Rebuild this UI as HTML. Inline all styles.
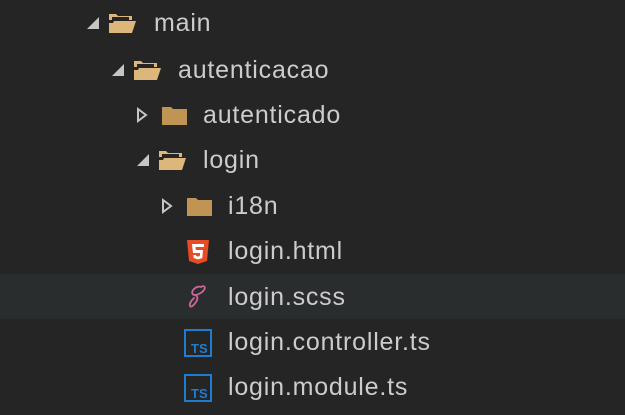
<!DOCTYPE html>
<html><head><style>
body{margin:0;width:625px;height:415px;background:#252526;overflow:hidden;font-family:"Liberation Sans",sans-serif;}
.row{position:absolute;left:0;width:625px;height:45px;}
.hov{background:#2a2d2e;}
.t{position:absolute;top:8px;font-size:25px;letter-spacing:0.8px;color:#cccccc;line-height:30px;}
svg{position:absolute;}
</style></head><body>
<div class="row" style="top:0">
 <svg style="left:86px;top:16px" width="14" height="14"><polygon points="13,1 13,13 1,13" fill="#c5c5c5"/></svg>
 <svg style="left:108px;top:11px" width="30" height="24"><path d="M1 3h7l2 2h14v4H1z" fill="#dcb67a"/><path d="M4 6h17v3H4z" fill="#252526"/><path d="M6 10h22l-4 12H1V12h4z" fill="#dcb67a"/></svg>
 <div class="t" style="left:154px">main</div>
</div>
<div class="row" style="top:47px">
 <svg style="left:111px;top:16px" width="14" height="14"><polygon points="13,1 13,13 1,13" fill="#c5c5c5"/></svg>
 <svg style="left:133px;top:11px" width="30" height="24"><path d="M1 3h7l2 2h14v4H1z" fill="#dcb67a"/><path d="M4 6h17v3H4z" fill="#252526"/><path d="M6 10h22l-4 12H1V12h4z" fill="#dcb67a"/></svg>
 <div class="t" style="left:178px">autenticacao</div>
</div>
<div class="row" style="top:92px">
 <svg style="left:136px;top:15px" width="12" height="16"><polygon points="2,2 10,8 2,14" fill="none" stroke="#c5c5c5" stroke-width="2"/></svg>
 <svg style="left:161px;top:12px" width="28" height="22"><path d="M1 3h9l2 2h14v16H1z" fill="#c09553"/></svg>
 <div class="t" style="left:203px">autenticado</div>
</div>
<div class="row" style="top:137px">
 <svg style="left:136px;top:16px" width="14" height="14"><polygon points="13,1 13,13 1,13" fill="#c5c5c5"/></svg>
 <svg style="left:158px;top:11px" width="30" height="24"><path d="M1 3h7l2 2h14v4H1z" fill="#dcb67a"/><path d="M4 6h17v3H4z" fill="#252526"/><path d="M6 10h22l-4 12H1V12h4z" fill="#dcb67a"/></svg>
 <div class="t" style="left:203px">login</div>
</div>
<div class="row" style="top:183px">
 <svg style="left:161px;top:15px" width="12" height="16"><polygon points="2,2 10,8 2,14" fill="none" stroke="#c5c5c5" stroke-width="2"/></svg>
 <svg style="left:186px;top:12px" width="28" height="22"><path d="M1 3h9l2 2h14v16H1z" fill="#c09553"/></svg>
 <div class="t" style="left:228px">i18n</div>
</div>
<div class="row" style="top:228px">
 <svg style="left:186px;top:11px" width="24" height="26" viewBox="0 0 24 26"><path d="M1 1h22l-2 21-9 3-9-3z" fill="#e44d26"/><path d="M6 5h12v3H9.5l.3 3H17l-.7 8L12 20.5 7.7 19l-.3-3h2.6l.2 1 1.8.6 1.8-.6.3-3H7z" fill="#fff"/></svg>
 <div class="t" style="left:228px">login.html</div>
</div>
<div class="row hov" style="top:274px">
 <svg style="left:187px;top:10px" width="20" height="28" viewBox="0 0 20 28"><path d="M14 3c3-2 5 0 3 3-2 3-7 5-9 5-3 0-4-3-1-6 2-2 5-3 7-2M8 11c3 1 3 4 1 7-2 3-5 6-6 4-1-3 2-6 4-8" fill="none" stroke="#cd6799" stroke-width="1.8" stroke-linecap="round"/></svg>
 <div class="t" style="left:228px">login.scss</div>
</div>
<div class="row" style="top:319px">
 <svg style="left:184px;top:10px" width="28" height="28"><rect x="1" y="1" width="26" height="26" fill="none" stroke="#1e7cd1" stroke-width="2"/><text x="7" y="24" font-family="Liberation Sans" font-size="13" font-weight="bold" fill="#1e7cd1">TS</text></svg>
 <div class="t" style="left:228px">login.controller.ts</div>
</div>
<div class="row" style="top:364px">
 <svg style="left:184px;top:10px" width="28" height="28"><rect x="1" y="1" width="26" height="26" fill="none" stroke="#1e7cd1" stroke-width="2"/><text x="7" y="24" font-family="Liberation Sans" font-size="13" font-weight="bold" fill="#1e7cd1">TS</text></svg>
 <div class="t" style="left:228px">login.module.ts</div>
</div>
</body></html>
